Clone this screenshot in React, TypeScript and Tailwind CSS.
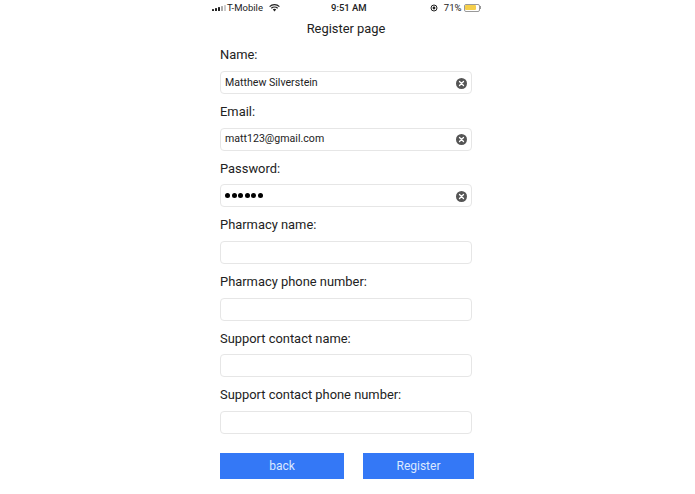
const font = { fontFamily: "Roboto, Inter, sans-serif" };

function Clear() {
  return (
    <svg width="11" height="11" viewBox="0 0 11 11" className="mt-[1px] shrink-0">
      <circle cx="5.5" cy="5.5" r="5.5" fill="#555" />
      <path d="M3.5 3.5 7.5 7.5M7.5 3.5 3.5 7.5" stroke="#fff" strokeWidth="1.3" strokeLinecap="round" />
    </svg>
  );
}

function Field({ label, value, password }: { label: string; value?: string; password?: boolean }) {
  return (
    <div className="flex h-[56.67px] flex-col">
      <div className="h-[34px] pt-[8px] text-[12.9px] leading-[20px] text-[#222]">{label}</div>
      <div className="flex h-[23px] w-[252px] items-center justify-between rounded-[4px] border border-[#e6e6e6] bg-white pl-[4px] pr-[4.5px]">
        {password ? (
          <div className="flex gap-[1.6px]">
            {[0, 1, 2, 3, 4, 5].map((i) => (
              <span key={i} className="h-[5px] w-[5px] rounded-full bg-black" />
            ))}
          </div>
        ) : (
          <span className="pt-[1px] text-[10.6px] leading-none text-[#222]">{value}</span>
        )}
        {value !== undefined && <Clear />}
      </div>
    </div>
  );
}

export default function App() {
  return (
    <div className="h-[494px] w-[695px] overflow-hidden bg-white pl-[212px]" style={font}>
      <div className="w-[278px]">
        <div className="relative flex h-[15px] items-center text-[9.5px] text-[#222]">
          <div className="flex items-center">
            <div className="flex items-end gap-[1px]">
              <span className="h-[2px] w-[2px] rounded-[0.5px] bg-[#222]" />
              <span className="h-[3px] w-[2px] rounded-[0.5px] bg-[#222]" />
              <span className="h-[4px] w-[2px] rounded-[0.5px] bg-[#222]" />
              <span className="h-[5px] w-[2px] rounded-[0.5px] bg-[#aaa]" />
              <span className="h-[6px] w-[2px] rounded-[0.5px] bg-[#ccc]" />
            </div>
            <span className="ml-[1px] leading-none">T-Mobile</span>
            <svg width="11" height="8" viewBox="0 0 11 8" className="ml-[6px]">
              <path d="M0.6 2.6a7 7 0 0 1 9.8 0" fill="none" stroke="#222" strokeWidth="1.2" />
              <path d="M2.3 4.3a4.6 4.6 0 0 1 6.4 0" fill="none" stroke="#222" strokeWidth="1.2" />
              <path d="M3.8 5.6a2.4 2.4 0 0 1 3.4 0L5.5 7.6z" fill="#222" />
            </svg>
          </div>
          <span className="absolute left-[119px] top-[3px] text-[9.5px] font-medium leading-[9px]">9:51 AM</span>
          <div className="ml-auto flex items-center pr-[9px]">
            <svg width="8" height="8" viewBox="0 0 8 8">
              <circle cx="4" cy="4" r="3" fill="none" stroke="#222" strokeWidth="1" />
              <circle cx="4" cy="4" r="1.4" fill="#222" />
            </svg>
            <span className="ml-[6px] leading-none">71%</span>
            <div className="ml-[2px] flex h-[8px] w-[16px] items-center rounded-[2px] border border-[#999] p-[0.5px]">
              <div className="h-full w-[11px] rounded-[1px] bg-[#f5cf4b]" />
            </div>
            <span className="ml-[0.5px] h-[3px] w-[1px] bg-[#999]" />
          </div>
        </div>
        <div className="pl-[8px]">
          <div className="flex h-[22.33px] w-[252px] items-center justify-center pt-[6px] text-[12.9px] leading-none text-[#222]">
            Register page
          </div>
          <Field label="Name:" value="Matthew Silverstein" />
          <Field label="Email:" value="matt123@gmail.com" />
          <Field label="Password:" value="" password />
          <Field label="Pharmacy name:" />
          <Field label="Pharmacy phone number:" />
          <Field label="Support contact name:" />
          <Field label="Support contact phone number:" />
          <div className="mt-[18.7px] flex gap-[19px] text-[12px]">
            <button className="h-[26px] w-[124px] bg-[#3478f6] pt-[1px] text-[#dbe8ff]">back</button>
            <button className="h-[26px] w-[111px] bg-[#3478f6] pt-[1px] text-[#dbe8ff]">Register</button>
          </div>
        </div>
      </div>
    </div>
  );
}
